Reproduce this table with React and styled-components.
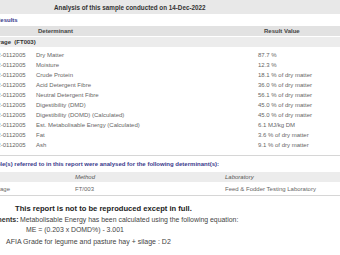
import React from "react";
import styled, { createGlobalStyle } from "styled-components";

const GlobalStyle = createGlobalStyle`
  html, body {
    margin: 0;
    padding: 0;
    background: #fff;
    overflow: hidden;
  }
  body {
    font-family: "Liberation Sans", Arial, sans-serif;
    color: #555;
  }
`;

const rows = [
  ["Dry Matter", "87.7 %"],
  ["Moisture", "12.3 %"],
  ["Crude Protein", "18.1 % of dry matter"],
  ["Acid Detergent Fibre", "36.0 % of dry matter"],
  ["Neutral Detergent Fibre", "56.1 % of dry matter"],
  ["Digestibility (DMD)", "45.0 % of dry matter"],
  ["Digestibility (DOMD) (Calculated)", "45.0 % of dry matter"],
  ["Est. Metabolisable Energy (Calculated)", "6.1 MJ/kg DM"],
  ["Fat", "3.6 % of dry matter"],
  ["Ash", "9.1 % of dry matter"],
];

const App = () => {
  return (
    <Page>
      <GlobalStyle />
      <TitleBar>Analysis of this sample conducted on 14-Dec-2022</TitleBar>
      <SectionLink>Results</SectionLink>
      <HeadRow>
        <span />
        <HeadCell $indent={2}>Determinant</HeadCell>
        <HeadCell $indent={6}>Result Value</HeadCell>
      </HeadRow>
      <GroupRow>Forage&nbsp; (FT003)</GroupRow>
      <Body>
        {rows.map(([name, value]) => (
          <DataRow key={name}>
            <Cell>22-0112005</Cell>
            <Cell>{name}</Cell>
            <Cell>{value}</Cell>
          </DataRow>
        ))}
      </Body>
      <Note>Sample(s) referred to in this report were analysed for the following determinant(s):</Note>
      <MethodHead>
        <span />
        <Italic>Method</Italic>
        <Italic>Laboratory</Italic>
      </MethodHead>
      <MethodRow>
        <Cell>Forage</Cell>
        <Cell>FT/003</Cell>
        <Cell>Feed &amp; Fodder Testing Laboratory</Cell>
      </MethodRow>
      <Disclaimer>This report is not to be reproduced except in full.</Disclaimer>
      <Comments>
        <CommentLabel>Comments:</CommentLabel>
        <CommentText>
          Metabolisable Energy has been calculated using the following equation:
          <Formula>ME = (0.203 x DOMD%) - 3.001</Formula>
        </CommentText>
      </Comments>
      <Grade>AFIA Grade for legume and pasture hay + silage : D2</Grade>
    </Page>
  );
};

export default App;

const Page = styled.div`
  width: 440px;
  margin-left: -20px;
  font-size: 6px;
`;

const TitleBar = styled.div`
  height: 14px;
  background: #e8e8e8;
  display: flex;
  align-items: center;
  padding-left: 74px;
  font-weight: bold;
  font-size: 6.3px;
  color: #333;
`;

const SectionLink = styled.div`
  height: 12px;
  display: flex;
  align-items: center;
  padding-left: 16px;
  font-weight: bold;
  color: #3a3a8c;
`;

const HeadRow = styled.div`
  display: grid;
  grid-template-columns: 56px 222px 1fr;
  height: 10px;
  align-items: center;
  background: #e2e2e2;
  border-bottom: 1px solid #fff;
`;

const HeadCell = styled.div`
  font-weight: bold;
  color: #444;
  padding-left: ${(p) => p.$indent || 0}px;
`;

const GroupRow = styled.div`
  height: 10px;
  display: flex;
  align-items: center;
  padding-left: 11px;
  background: #ececec;
  font-weight: bold;
  color: #333;
`;

const Body = styled.div`
  padding: 3px 0 5px 14px;
  border-bottom: 1px solid #d6d6d6;
`;

const DataRow = styled.div`
  display: grid;
  grid-template-columns: 42px 222px 1fr;
  height: 10px;
  align-items: center;
`;

const Cell = styled.div`
  color: #666;
  white-space: nowrap;
`;

const Note = styled.div`
  height: 16px;
  display: flex;
  align-items: center;
  padding-left: 4px;
  font-weight: bold;
  color: #3a3a8c;
`;

const MethodHead = styled.div`
  display: grid;
  grid-template-columns: 95px 150px 1fr;
  height: 10px;
  align-items: center;
  background: #ececec;
`;

const Italic = styled.div`
  font-style: italic;
  color: #555;
`;

const MethodRow = styled.div`
  display: grid;
  grid-template-columns: 84px 150px 1fr;
  height: 13px;
  align-items: center;
  padding-left: 11px;
  border-bottom: 1px solid #d6d6d6;
`;

const Disclaimer = styled.div`
  margin-top: 6px;
  height: 12px;
  display: flex;
  align-items: center;
  padding-left: 35px;
  font-weight: bold;
  font-size: 7.6px;
  color: #222;
`;

const Comments = styled.div`
  display: flex;
  gap: 10px;
  margin-top: 1px;
`;

const CommentLabel = styled.div`
  width: 30px;
  font-weight: bold;
  font-size: 7px;
  color: #333;
  text-align: right;
  line-height: 10px;
`;

const CommentText = styled.div`
  font-size: 6.9px;
  color: #444;
  line-height: 10px;
`;

const Formula = styled.div`
  padding-left: 6px;
`;

const Grade = styled.div`
  margin-top: 2px;
  padding-left: 26px;
  font-size: 7px;
  color: #444;
  line-height: 10px;
`;
